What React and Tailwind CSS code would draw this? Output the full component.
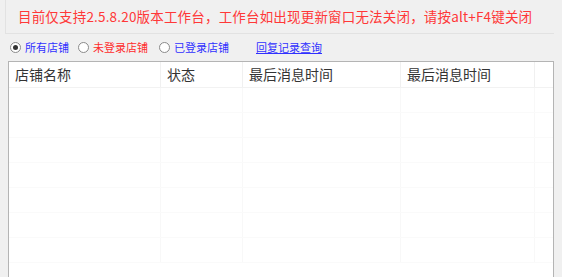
import React from "react";

const cjk = { fontFamily: '"Noto Sans CJK SC", "Noto Sans", sans-serif' };

function Radio({ checked }) {
  return (
    <span className="inline-flex h-[11px] w-[11px] items-center justify-center rounded-full border border-[#8a8a8a] bg-white">
      {checked && <span className="h-[5px] w-[5px] rounded-full bg-[#333]" />}
    </span>
  );
}

export default function App() {
  const cols = [
    { w: "w-[152px]", label: "店铺名称" },
    { w: "w-[82px]", label: "状态" },
    { w: "w-[158px]", label: "最后消息时间" },
    { w: "w-[134px]", label: "最后消息时间" },
  ];
  return (
    <div className="h-[277px] w-[562px] overflow-hidden bg-[#f0f0f0]" style={cjk}>
      <div className="ml-[5px] flex h-[34px] w-[549px] items-center border-b border-l border-[#e2e2e2] pl-[12px]">
        <span className="text-[13.5px] leading-none tracking-[0.18px] text-[#ff3838]">
          目前仅支持2.5.8.20版本工作台，工作台如出现更新窗口无法关闭，请按alt+F4键关闭
        </span>
      </div>
      <div className="flex h-[27px] items-center pl-[10px] text-[11px] leading-none">
        <Radio checked />
        <span className="ml-[4px] text-[#3030ff]">所有店铺</span>
        <span className="ml-[9px]"><Radio /></span>
        <span className="ml-[4px] text-[#ff2c2c]">未登录店铺</span>
        <span className="ml-[11px]"><Radio /></span>
        <span className="ml-[4px] text-[#3030ff]">已登录店铺</span>
        <span className="ml-[27px] text-[#3030ff] underline">回复记录查询</span>
      </div>
      <div className="ml-[8px] h-[220px] w-[546px] border border-[#b4b4b4] bg-white">
        <div className="flex h-[26px] border-b border-[#f2f2f2] text-[14px] text-[#333]">
          {cols.map((c, i) => (
            <div key={i} className={`${c.w} flex items-center border-r border-[#f0f0f0] pl-[6px]`}>
              {c.label}
            </div>
          ))}
        </div>
        {[0, 1, 2, 3, 4, 5, 6].map((r) => (
          <div key={r} className="flex h-[25px] border-b border-[#fafafa]">
            {cols.map((c, i) => (
              <div key={i} className={`${c.w} border-r border-[#f8f8f8]`} />
            ))}
          </div>
        ))}
      </div>
    </div>
  );
}
